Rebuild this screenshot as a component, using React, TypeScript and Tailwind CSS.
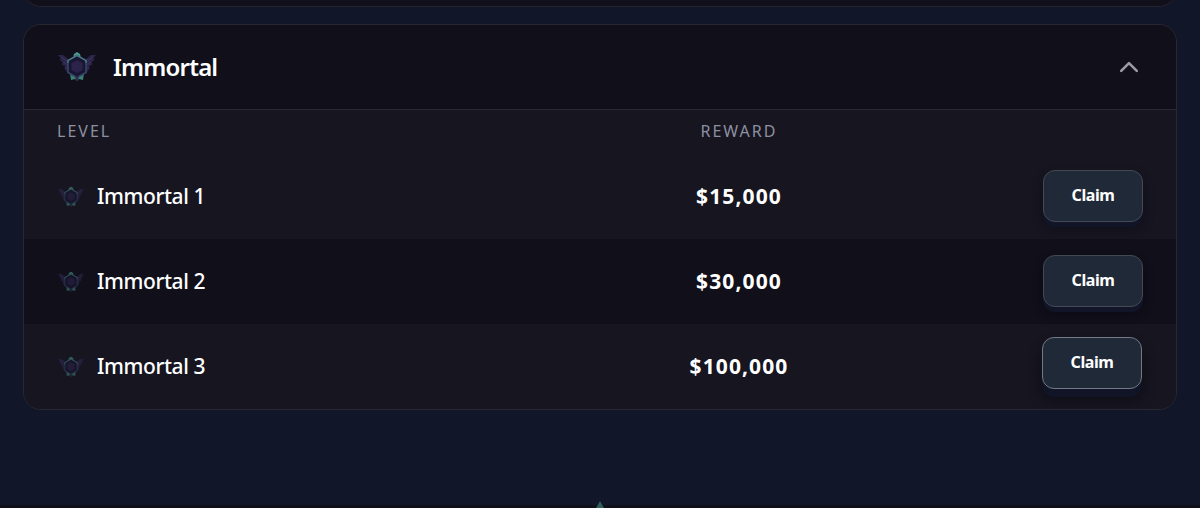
import { ChevronUp } from 'lucide-react'

const tiers = [
  { name: 'Immortal 1', reward: '$15,000', striped: false, raised: false },
  { name: 'Immortal 2', reward: '$30,000', striped: true, raised: false },
  { name: 'Immortal 3', reward: '$100,000', striped: false, raised: true },
]

function Emblem({ className }: { className: string }) {
  return (
    <svg viewBox="0 0 38 30" className={className} fill="none">
      <path d="M0 3l5 0 4 3 5 5v9l-5 0-3-4 2-1-5-3 2-1-4-4 2 0z" fill="#2b2448" />
      <path d="M38 3l-5 0-4 3-5 5v9l5 0 3-4-2-1 5-3-2-1 4-4-2 0z" fill="#2b2448" />
      <path d="M3 5l8 6M5 10l6 4M7 15l5 2M35 5l-8 6M33 10l-6 4M31 15l-5 2" stroke="#3e335c" strokeWidth="1" />
      <path d="M12 21l4 2 3 3 3-3 4-2-1 7-4-1-2 2-2-2-4 1z" fill="#3c8272" />
      <path d="M16 2l3-2 3 2 1 4h-8z" fill="#4a9a8e" />
      <path d="M19 3.5l9 5v12l-9 5-9-5v-12z" fill="#17152f" stroke="#35456a" strokeWidth="1.6" />
      <path d="M10 11V8.500l9-5 9 5V11" stroke="#4b8088" strokeWidth="1.2" />
      <path d="M19 8l5.500 3v7L19 21l-5.500-3v-7z" fill="#2b2349" stroke="#231d40" />
      <path d="M17.500 24h3v4L19 29.500 17.500 28z" fill="#30294d" />
    </svg>
  )
}

function ClaimButton({ raised }: { raised: boolean }) {
  return (
    <button
      className={`h-[52px] w-[100px] rounded-xl border bg-[#202938] pb-[3px] text-[16px] font-bold tracking-[-0.45px] text-white ${
        raised
          ? '-translate-x-px -translate-y-[3px] border-[#737987] shadow-[0_8px_0_#111426,0_10px_14px_rgba(0,0,0,0.4)]'
          : 'border-[#434955] shadow-[0_5px_0_#111527,0_6px_12px_rgba(0,0,0,0.3)]'
      }`}
    >
      Claim
    </button>
  )
}

export default function App() {
  return (
    <div className="relative flex h-[508px] flex-col overflow-hidden bg-[#111628] px-[23px] font-['Noto_Sans',sans-serif] text-white">
      <div className="-mt-[33px] h-10 shrink-0 rounded-[18px] border border-[#25242e] bg-[#100f1a]" />

      <section className="mt-[17px] h-[386px] shrink-0 overflow-hidden rounded-[18px] border border-[#292832] bg-[#161520]">
        <header className="flex h-[85px] items-center border-b border-[#292832] bg-[#100f1a] pr-[35px] pl-[34px]">
          <Emblem className="h-[30px] w-[38px]" />
          <h2 className="ml-[17px] pb-px text-[24px] font-semibold tracking-[-0.8px]">Immortal</h2>
          <ChevronUp className="mb-px ml-auto h-6 w-6 scale-[1.3] text-[#9b9ba7]" strokeWidth={2} />
        </header>

        <div className="grid h-11 grid-cols-[534px_296px_1fr] items-center pr-[33px] pb-0.5 pl-[33px] text-[16px] tracking-[2px] text-[#8e90a0]">
          <span>LEVEL</span>
          <span className="text-center">REWARD</span>
        </div>

        {tiers.map((tier) => (
          <div
            key={tier.name}
            className={`grid h-[85px] grid-cols-[533px_296px_1fr] items-center pr-[33px] pl-[34px] ${
              tier.striped ? 'bg-[#100f1a]' : 'bg-[#161520]'
            }`}
          >
            <div className="flex items-center gap-[13px]">
              <Emblem className="h-[22px] w-[26px] opacity-60" />
              <span className="text-[21px] font-medium tracking-[-0.4px]">{tier.name}</span>
            </div>
            <span className="text-center text-[21px] font-bold tracking-[1.1px]">{tier.reward}</span>
            <div className="flex justify-end pb-px">
              <ClaimButton raised={tier.raised} />
            </div>
          </div>
        ))}
      </section>

      <div className="absolute inset-x-0 bottom-0 flex h-[3px] justify-center bg-[#100f1a]">
        <svg viewBox="0 0 10 8" className="absolute bottom-0 h-2 w-[10px]">
          <path d="M5 1l4 7H1z" fill="#315e59" />
        </svg>
      </div>
    </div>
  )
}
